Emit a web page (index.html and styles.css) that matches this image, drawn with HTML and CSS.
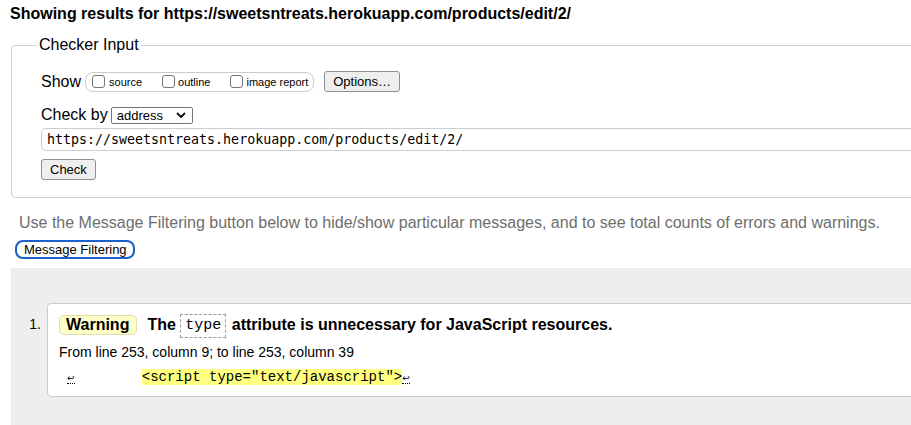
FILE: index.html
```html
<!DOCTYPE html>
<html lang="en">
<head>
<meta charset="utf-8">
<title>Nu Html Checker</title>
<link rel="stylesheet" href="styles.css">
</head>
<body>
<h2 class="heading">Showing results for https://sweetsntreats.herokuapp.com/products/edit/2/</h2>
<fieldset class="checker">
  <legend class="legend">Checker Input</legend>
  <div class="row">
    <span class="label">Show</span>
    <span class="cbgroup">
      <label class="cb"><span class="box"></span>source</label>
      <label class="cb"><span class="box"></span>outline</label>
      <label class="cb"><span class="box"></span>image report</label>
    </span>
    <button class="btn options">Options…</button>
  </div>
  <div class="row">
    <span class="label">Check by</span>
    <span class="select">address
      <svg class="chev" width="10" height="7" viewBox="0 0 10 7"><path d="M1.5 1.5 L5 5 L8.5 1.5" fill="none" stroke="#111" stroke-width="1.8" stroke-linecap="round" stroke-linejoin="round"/></svg>
    </span>
  </div>
  <div class="url">https://sweetsntreats.herokuapp.com/products/edit/2/</div>
  <div class="row"><button class="btn check">Check</button></div>
</fieldset>
<p class="hint">Use the Message Filtering button below to hide/show particular messages, and to see total counts of errors and warnings.</p>
<button class="filter">Message Filtering</button>
<div class="results">
  <ol class="msgs">
    <li class="msg">
      <span class="num">1.</span>
      <div class="card">
        <p class="title"><span class="badge">Warning</span> <span class="text">The <code class="tag">type</code> attribute is unnecessary for JavaScript resources.</span></p>
        <p class="loc">From line 253, column 9; to line 253, column 39</p>
        <p class="extract"><span class="lf">↩</span><span class="code">        </span><mark class="hl">&lt;script type="text/javascript"&gt;</mark><span class="lf">↩</span></p>
      </div>
    </li>
  </ol>
</div>
</body>
</html>
```

FILE: styles.css
```css
html, body {
  overflow: hidden;
}
body {
  margin: 0;
  width: 1000px;
  font-family: "Liberation Sans", Arial, sans-serif;
  color: #000;
  background: #fff;
}
.heading {
  font-size: 16px;
  font-weight: bold;
  margin: 0;
  padding: 4px 10px 0;
  line-height: 20px;
}
.checker {
  margin: 12px 0 0 11px;
  border: 1px solid #cfcfcf;
  border-radius: 4px;
  padding: 17px 28px 17px 29px;
  display: flex;
  flex-direction: column;
  gap: 0;
}
.legend {
  font-size: 16px;
  padding: 0 2px;
  margin-left: -4px;
  line-height: 18px;
}
.row {
  display: flex;
  align-items: center;
}
.row + .row { margin-top: 13px; }
.label {
  font-size: 16px;
  line-height: 20px;
}
.cbgroup {
  display: inline-flex;
  align-items: center;
  gap: 20px;
  margin-left: 4px;
  height: 18px;
  border: 1px solid #ccc;
  border-radius: 8px;
  padding: 0 5px 0 6px;
  font-size: 11px;
}
.cb {
  display: inline-flex;
  align-items: center;
}
.box {
  width: 11px;
  height: 11px;
  border: 1px solid #777;
  border-radius: 3px;
  background: #fff;
  margin-right: 3px;
}
.cb:first-child .box { margin-right: 4px; }
.btn {
  font-family: "Liberation Sans", Arial, sans-serif;
  font-size: 13px;
  color: #000;
  background: #efefef;
  border: 1px solid #8f8f8f;
  border-radius: 3px;
  height: 21px;
  padding: 0 8px;
  line-height: 19px;
}
.options {
  margin-left: 10px;
}
.select {
  display: inline-flex;
  align-items: center;
  justify-content: space-between;
  margin-left: 3px;
  width: 82px;
  height: 17px;
  box-sizing: border-box;
  border: 1px solid #767676;
  border-radius: 2px;
  padding: 0 6px 0 5px;
  font-size: 13px;
}
.url {
  margin-top: 3px;
  height: 23px;
  box-sizing: border-box;
  border: 1px solid #ccc;
  border-radius: 5px;
  padding: 0 5px;
  font-family: "DejaVu Sans Mono", monospace;
  font-size: 13.3px;
  line-height: 21px;
}
.url + .row { margin-top: 8px; }
.hint {
  margin: 15px 0 0 19px;
  font-size: 16px;
  line-height: 20px;
  color: #6e6e6e;
}
.filter {
  display: block;
  margin: 7px 0 0 15px;
  height: 19px;
  padding: 0 6px 0 7px;
  font-family: "Liberation Sans", Arial, sans-serif;
  font-size: 13px;
  line-height: 15px;
  color: #000;
  background: #fff;
  border: 2px solid #1a60cc;
  border-radius: 8px;
}
.results {
  margin: 9px 0 0 11px;
  background: #eee;
  padding: 35px 0 60px;
}
.msgs {
  margin: 0;
  padding: 0;
  list-style: none;
}
.msg {
  display: flex;
  align-items: flex-start;
}
.num {
  width: 36px;
  box-sizing: border-box;
  padding: 13px 6px 0 0;
  text-align: right;
  font-size: 14px;
}
.card {
  flex: 1;
  background: #fff;
  border: 1px solid #ccc;
  border-radius: 4px;
  padding: 9px 11px 9px;
}
.title {
  margin: 0;
  display: flex;
  align-items: center;
  font-size: 16px;
  font-weight: bold;
  line-height: 24px;
}
.badge {
  display: inline-block;
  background: #ffffc8;
  border: 1px solid #dedea8;
  border-radius: 5px;
  padding: 0 7px 0 6px;
  line-height: 18px;
  margin-right: 10px;
}
.tag {
  display: inline-block;
  font-family: "Liberation Mono", monospace;
  font-weight: normal;
  font-size: 15px;
  border: 1px dashed #999;
  padding: 0 4px;
  line-height: 22px;
  vertical-align: middle;
  margin: 0 1px 0 0;
}
.loc {
  margin: 4px 0 0;
  font-size: 14px;
  line-height: 20px;
}
.extract {
  margin: 6px 0 0 8px;
  font-family: "Liberation Mono", monospace;
  font-size: 14px;
  line-height: 18px;
  white-space: pre;
}
.lf {
  font-family: "DejaVu Sans", sans-serif;
  font-size: 9px;
  border-bottom: 1px dotted #000;
  vertical-align: baseline;
}
.hl {
  background: #ffff80;
  color: #000;
}
```
